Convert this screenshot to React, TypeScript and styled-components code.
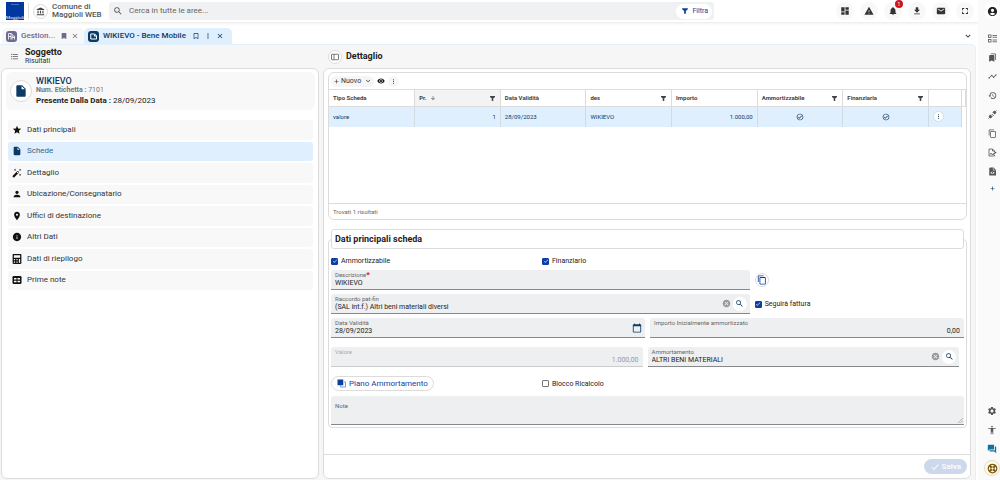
import React, { useState } from "react";
import styled, { createGlobalStyle, css } from "styled-components";
import {
  MdAccessibility, MdAccountBalance, MdAccountCircle, MdAdd, MdArrowDownward, MdAutoFixHigh, MdBookmark,
  MdBookmarkBorder, MdBookmarks, MdCalendarToday, MdCancel, MdCheck, MdClose, MdContentCopy, MdDashboard,
  MdExpandMore, MdFileDownload, MdFormatListBulleted, MdForum, MdFullscreen, MdHistory, MdInfo,
  MdInsertDriveFile, MdMail, MdMoreVert, MdNotifications, MdOutlineCheckCircle, MdPerson, MdPlace, MdSearch,
  MdSettings, MdStar, MdTimeline, MdVisibility, MdWarning,
} from "react-icons/md";
import { FaCalculator } from "react-icons/fa";

const navy = "#0b3a66";
const blue = "#0a3fa3";
const sky = "#e0effd";
const line = "#dcdcdc";

const GlobalStyle = createGlobalStyle`
  * { box-sizing: border-box; }
  body { margin: 0; background: #fff; color: #333; font: 8px/10px Roboto, sans-serif; }
  button, input, textarea { font: inherit; color: inherit; margin: 0; }
  button { border: 0; padding: 0; background: none; cursor: pointer; }
  svg { display: block; flex: none; }
`;

const Page = styled.div`
  display: flex;
  min-height: 100vh;
`;

const Main = styled.div`
  flex: 1;
  min-width: 0;
  display: flex;
  flex-direction: column;
`;

const Rail = styled.aside`
  width: 22px;
  padding: 3px 0 4px 6px;
  background: #fafafa;
  display: flex;
  flex-direction: column;
  align-items: center;
  gap: 3px;
`;

const RailButton = styled.button<{ $color?: string; $small?: boolean }>`
  width: 16px;
  height: ${(p) => (p.$small ? 12 : 16)}px;
  display: grid;
  place-items: center;
  color: ${(p) => p.$color || "#555"};
`;

const Account = styled(RailButton)`
  border-radius: 8px;
  background: #fff;
  color: #222;
  margin-bottom: 8px;
`;

const Help = styled(RailButton)`
  border: 1px solid #e4dcc0;
  border-radius: 8px;
  background: #fffbea;
  color: #7a5a10;
`;

const Spacer = styled.div`
  flex: 1;
`;

const Header = styled.header`
  height: 22px;
  padding: 0 4px 0 6px;
  display: flex;
  align-items: center;
  box-shadow: 0 1px 3px rgba(0, 0, 0, 0.1);
`;

const Brand = styled.div`
  width: 103px;
  display: flex;
  align-items: center;
  gap: 4px;
`;

const Divider = styled.span`
  width: 1px;
  height: 16px;
  background: #ddd;
`;

const Circle = styled.span<{ $size: number }>`
  width: ${(p) => p.$size}px;
  height: ${(p) => p.$size}px;
  border: 1px solid ${line};
  border-radius: 50%;
  background: #fff;
  display: grid;
  place-items: center;
  flex: none;
`;

const BrandName = styled.div`
  font-weight: 500;
  line-height: 8px;
  color: #555;
  white-space: nowrap;
`;

const Search = styled.form`
  flex: 0 1 605px;
  height: 18px;
  padding: 0 2px 0 4px;
  border-radius: 3px;
  background: #f0f1f2;
  display: flex;
  align-items: center;
  gap: 6px;
  color: #555;
`;

const SearchInput = styled.input`
  flex: 1;
  min-width: 0;
  border: 0;
  padding: 0;
  outline: 0;
  background: none;
  &::placeholder { color: #666; opacity: 1; }
`;

const FilterButton = styled.button`
  height: 15px;
  padding: 0 4px 0 5px;
  border-radius: 8px;
  background: #fff;
  display: flex;
  align-items: center;
  gap: 3px;
  font-size: 7px;
  color: ${blue};
`;

const HeaderActions = styled.nav`
  margin-left: auto;
  display: flex;
  gap: 6px;
`;

const HeaderButton = styled.button`
  position: relative;
  width: 18px;
  height: 18px;
  border-radius: 9px;
  background: #f8f8f8;
  color: #333;
  display: grid;
  place-items: center;
`;

const Badge = styled.span`
  position: absolute;
  top: -2px;
  right: -1px;
  width: 8px;
  height: 8px;
  border-radius: 4px;
  background: #d0151c;
  color: #fff;
  font-size: 5px;
  line-height: 8px;
`;

const Tabs = styled.div`
  height: 22px;
  padding: 6px 5px 0 2px;
  display: flex;
  align-items: stretch;
`;

const Tab = styled.div<{ $active?: boolean }>`
  width: ${(p) => (p.$active ? 148 : 82)}px;
  padding: 0 4px;
  border-radius: 5px 5px 0 0;
  display: flex;
  align-items: center;
  gap: 4px;
  font-weight: 500;
  white-space: nowrap;
  background: ${(p) => (p.$active ? sky : "#f7f7f7")};
  color: ${(p) => (p.$active ? navy : "#6d6a92")};
`;

const TabTools = styled.span<{ $wide?: boolean }>`
  margin-left: auto;
  display: flex;
  gap: ${(p) => (p.$wide ? 4 : 3)}px;
  padding-right: ${(p) => (p.$wide ? 4 : 1)}px;
`;

const IconButton = styled.button<{ $color?: string }>`
  color: ${(p) => p.$color || "inherit"};
  display: grid;
  place-items: center;
`;

const TabsMenu = styled(IconButton)`
  margin-left: auto;
  color: #333;
`;

const Workspace = styled.main`
  flex: 1;
  margin-right: 2px;
  padding: 0 4px 1px 1px;
  border: solid #e4f0fb;
  border-width: 1px 1px 0 0;
  border-radius: 0 5px 0 0;
  background: #f6f6f6;
  display: flex;
  gap: 4px;
`;

const Column = styled.section<{ $grow: number; $basis: number }>`
  flex: ${(p) => p.$grow} 1 ${(p) => p.$basis}px;
  min-width: 0;
  display: flex;
  flex-direction: column;
`;

const ColumnHeader = styled.div`
  height: 23px;
  padding: 0 4px 0 5px;
  display: flex;
  align-items: center;
  gap: 4px;
`;

const ListHeader = styled(ColumnHeader)`
  padding-left: 9px;
  gap: 6px;
`;

const Title = styled.h2`
  margin: 0;
  font-size: 9px;
  line-height: 9px;
  font-weight: 700;
  color: #222;
`;

const Subtitle = styled.div`
  line-height: 8px;
  font-size: 7px;
`;

const Card = styled.div`
  flex: 1;
  border: 1px solid ${line};
  border-radius: 6px;
  background: #fff;
  display: flex;
  flex-direction: column;
  padding: 3px 3px 4px 4px;
`;

const Summary = styled.div`
  height: 38px;
  padding: 0 4px;
  border-radius: 6px;
  background: #f8f8f8;
  display: flex;
  align-items: center;
  gap: 4px;
  color: ${navy};
`;

const SummaryName = styled.div`
  font-size: 9px;
  font-weight: 500;
  line-height: 9px;
`;

const SummaryLine = styled.div<{ $strong?: boolean }>`
  font-size: ${(p) => (p.$strong ? 8 : 7)}px;
  line-height: ${(p) => (p.$strong ? 11 : 9)}px;
  color: ${(p) => (p.$strong ? "#222" : "#777")};
  b { font-weight: 700; }
`;

const Menu = styled.nav`
  height: 170px;
  margin: 10px 2px 0;
  display: grid;
  grid-auto-rows: 1fr;
  gap: 2px;
`;

const MenuItem = styled.a<{ $active?: boolean }>`
  padding: 0 4px;
  border-radius: 3px;
  display: flex;
  align-items: center;
  gap: 5px;
  text-decoration: none;
  background: ${(p) => (p.$active ? sky : "#f8f8f8")};
  color: ${(p) => (p.$active ? "#3c6488" : "#333")};
  svg { color: ${(p) => (p.$active ? navy : "#111")}; }
`;

const Grid = styled.div`
  height: 148px;
  border: 1px solid ${line};
  border-radius: 6px;
  display: flex;
  flex-direction: column;
`;

const Toolbar = styled.div`
  height: 16px;
  padding: 0 2px;
  display: flex;
  align-items: center;
  gap: 3px;
`;

const Chip = styled.button`
  height: 11px;
  min-width: 11px;
  padding: 0 2px;
  border-radius: 6px;
  background: #f6f6f6;
  color: #333;
  font-size: 7px;
  display: flex;
  align-items: center;
  justify-content: center;
  span { margin: 0 3px 0 1px; }
`;

const Table = styled.table`
  width: 100%;
  table-layout: fixed;
  border-collapse: collapse;
  font-size: 6px;
  line-height: 8px;
  color: ${navy};
`;

const Th = styled.th<{ $sorted?: boolean }>`
  height: 17px;
  padding: 0 4px;
  border: solid ${line};
  border-width: 1px 1px 1px 0;
  text-align: left;
  font-weight: 700;
  color: #444;
  background: ${(p) => (p.$sorted ? "#f3f3f3" : "#fff")};
`;

const ThInner = styled.div`
  display: flex;
  align-items: center;
  gap: 3px;
  .filter { margin-left: auto; }
`;

const Td = styled.td<{ $align?: string; $blank?: boolean }>`
  height: 20px;
  padding: 0 4px;
  border-right: ${(p) => (p.$blank ? "0" : "1px solid #d3dbe2")};
  background: ${(p) => (p.$blank ? "#fff" : sky)};
  text-align: ${(p) => p.$align || "left"};
  svg { margin: 0 auto; }
`;

const RowMenu = styled.button`
  width: 11px;
  height: 11px;
  border: 1px solid ${line};
  border-radius: 6px;
  background: #fff;
  display: grid;
  place-items: center;
`;

const GridFooter = styled.div`
  margin-top: auto;
  height: 16px;
  padding: 3px 4px;
  border-top: 1px solid ${line};
  font-size: 6px;
  color: #666;
`;

const Group = styled.fieldset`
  min-width: 0;
  margin: 9px 0 0;
  padding: 7px 2px 2px;
  border: 1px solid ${line};
  border-radius: 4px;
  display: flex;
  flex-direction: column;
`;

const Legend = styled.legend`
  width: 100%;
  height: 20px;
  padding: 0 3px;
  border: 1px solid ${line};
  border-radius: 3px;
  background: #fff;
  font-size: 9px;
  line-height: 18px;
  font-weight: 700;
  color: #222;
`;

const Row = styled.div<{ $cols: string; $top?: number; $gap?: number; $right?: number }>`
  margin: ${(p) => p.$top || 0}px ${(p) => p.$right || 0}px 0 0;
  display: grid;
  grid-template-columns: ${(p) => p.$cols};
  gap: ${(p) => p.$gap || 0}px;
  align-items: center;
`;

const CheckLabel = styled.label`
  display: flex;
  align-items: center;
  gap: 3px;
  font-size: 7px;
  color: #222;
`;

const CheckMark = styled.span`
  display: grid;
  place-items: center;
  color: #fff;
  > * { grid-area: 1 / 1; }
  svg { pointer-events: none; }
`;

const CheckInput = styled.input`
  appearance: none;
  width: 7px;
  height: 7px;
  border: 1px solid #777;
  border-radius: 1px;
  background: #fff;
  &:checked { border-color: ${blue}; background: ${blue}; }
`;

const FieldBox = styled.div<{ $disabled?: boolean; $tall?: boolean }>`
  height: ${(p) => (p.$tall ? 29 : 20)}px;
  border-bottom: 1px solid ${(p) => (p.$disabled ? "#ccc" : "#888")};
  border-radius: 3px 3px 0 0;
  background: #edeff0;
  display: flex;
  align-items: center;
  color: ${(p) => (p.$disabled ? "#999" : "#222")};
`;

const FieldText = styled.div`
  flex: 1;
  min-width: 0;
  height: 100%;
  padding: 1px 0 0 4px;
  display: flex;
  flex-direction: column;
`;

const FieldLabel = styled.label<{ $disabled?: boolean }>`
  font-size: 6px;
  line-height: 8px;
  color: ${(p) => (p.$disabled ? "#aaa" : "#666")};
  b { color: #d0151c; font-size: 8px; line-height: 6px; }
`;

const inputStyle = css`
  width: 100%;
  border: 0;
  outline: 0;
  background: none;
`;

const FieldInput = styled.input<{ $right?: boolean }>`
  ${inputStyle}
  height: 8px;
  padding: 0 4px 0 0;
  font-size: 7px;
  line-height: 8px;
  text-align: ${(p) => (p.$right ? "right" : "left")};
`;

const NoteText = styled.textarea`
  ${inputStyle}
  flex: 1;
  min-height: 0;
  padding: 0;
  font-size: 7px;
  resize: none;
`;

const NoteLabel = styled(FieldLabel)`
  padding-top: 5px;
`;

const Grip = styled.svg`
  align-self: flex-end;
  margin: 0 1px 1px 0;
`;

const FieldTools = styled.div`
  display: flex;
  align-items: center;
  gap: 2px;
  padding-right: 3px;
`;

const RoundButton = styled.button<{ $outlined?: boolean }>`
  width: 14px;
  height: 14px;
  border: ${(p) => (p.$outlined ? `1px solid ${line}` : "0")};
  border-radius: 7px;
  background: #fff;
  color: ${(p) => (p.$outlined ? blue : navy)};
  display: grid;
  place-items: center;
`;

const PlanButton = styled.button`
  justify-self: start;
  height: 15px;
  padding: 0 5px;
  border: 1px solid ${line};
  border-radius: 8px;
  background: #fff;
  color: ${blue};
  display: flex;
  align-items: center;
  gap: 3px;
  white-space: nowrap;
`;

const CardFooter = styled.div`
  margin: auto -3px 0 -4px;
  height: 20px;
  padding: 4px 3px 0;
  border-top: 1px solid ${line};
  display: flex;
  justify-content: flex-end;
`;

const SaveButton = styled.button`
  height: 15px;
  padding: 0 6px;
  border-radius: 8px;
  background: #ccd8ec;
  color: #fff;
  font-weight: 500;
  display: flex;
  align-items: center;
  gap: 2px;
`;

type IconProps = { size?: number };

function Logo() {
  return (
    <svg width="18" height="18" viewBox="0 0 18 18" aria-label="Maggioli">
      <rect width="18" height="18" fill="#0038a0" />
      <path d="M5 2.500h8" stroke="#5b7fc8" strokeWidth="0.800" />
      <text x="9" y="16.500" fill="#fff" fontSize="5" textAnchor="middle" fontFamily="Liberation Serif, serif">Maggioli</text>
    </svg>
  );
}

function RegistryIcon() {
  return (
    <svg width="11" height="11" viewBox="0 0 22 22">
      <rect width="22" height="22" rx="6" fill="#6d6a92" />
      <path d="M5 17V5h5v12M5 11h5M12 17v-7h5v7M12 13h5M10 5l4 3" fill="none" stroke="#fff" strokeWidth="1.6" />
    </svg>
  );
}

function AssetIcon() {
  return (
    <svg width="11" height="11" viewBox="0 0 22 22">
      <rect width="22" height="22" rx="6" fill={navy} />
      <path d="M5.500 6h8l3.500 3.500V16H5.500z" fill="none" stroke="#fff" strokeWidth="2" strokeLinejoin="round" />
      <path d="M12 6v5h5z" fill="#fff" />
    </svg>
  );
}

function PanelIcon() {
  return (
    <svg width="8" height="8" viewBox="0 0 16 16" fill="none" stroke="#555" strokeWidth="1.6">
      <rect x="1" y="2.500" width="14" height="11" rx="1" />
      <path d="M6 3v10" />
    </svg>
  );
}

function Funnel({ size = 7 }: IconProps) {
  return (
    <svg className="filter" width={size} height={size} viewBox="0 0 14 14" fill="currentColor">
      <path d="M2 2h10v2L8.500 7V12h-3V7L2 4z" />
    </svg>
  );
}

function LifeRing() {
  return (
    <svg width="11" height="11" viewBox="0 0 22 22" fill="none" stroke="currentColor">
      <circle cx="11" cy="11" r="8.500" strokeWidth="2.500" />
      <circle cx="11" cy="11" r="3" strokeWidth="2" />
      <path d="M5 5l4 4M17 5l-4 4M5 17l4-4M17 17l-4-4" strokeWidth="4" />
    </svg>
  );
}

function DetailListIcon({ size = 9 }: IconProps) {
  return (
    <svg width={size} height={size} viewBox="0 0 18 18" fill="none" stroke="currentColor" strokeWidth="1.6">
      <rect x="1" y="2" width="5" height="5" />
      <rect x="1" y="11" width="5" height="5" />
      <path d="M9 3h9M9 6.500h9M9 12h9M9 15.500h9" />
    </svg>
  );
}

function PlugIcon({ size = 9 }: IconProps) {
  return (
    <svg width={size} height={size} viewBox="0 0 18 18" fill="currentColor" stroke="currentColor">
      <path d="M9.500 4.500l4 4 1.500-1.500a2.800 2.800 0 0 0-4-4zM4.500 9.500l4 4L7 15a2.800 2.800 0 0 1-4-4z" strokeWidth="1" />
      <path d="M14.500 3.500L17 1M3.500 14.500L1 17M7 10.500l2.500-2.500M9 12.500l2.500-2.500" strokeWidth="1.800" />
    </svg>
  );
}

function SignIcon({ size = 9 }: IconProps) {
  return (
    <svg width={size} height={size} viewBox="0 0 18 18" fill="none" stroke="currentColor" strokeWidth="1.600">
      <path d="M13 8V6L9 2H2v14h11v-2" />
      <path d="M9 2v4h4M4 13l2-3 1.500 3H10" />
      <path d="M10 13l6.500-5" strokeWidth="2.400" />
    </svg>
  );
}

function FileViewIcon({ size = 9 }: IconProps) {
  return (
    <svg width={size} height={size} viewBox="0 0 18 18">
      <path d="M4 1h7l5 5v11H2.500V2.500z" fill="currentColor" />
      <path d="M10.500 2v4.500H15" fill="none" stroke="#fff" strokeWidth="1" />
      <path d="M4.500 11.500q4.500-4.500 9 0q-4.500 4.500-9 0z" fill="#fff" />
      <circle cx="9" cy="11.500" r="1.600" fill="currentColor" />
    </svg>
  );
}

function LedgerIcon({ size = 9 }: IconProps) {
  return (
    <svg width={size} height={size} viewBox="0 0 20 20">
      <rect x="1" y="2" width="18" height="16" rx="2.500" fill="currentColor" />
      <path d="M4 6h5v3H4zM11 6h5v3h-5zM4 11.500h5v3H4zM11 11.500h5v3h-5z" fill="#fff" />
    </svg>
  );
}

function PlanIcon() {
  return (
    <svg width="9" height="9" viewBox="0 0 18 18">
      <path d="M7 13v3h10V6h-3" fill="none" stroke="#7f9ad0" strokeWidth="2" />
      <rect x="1" y="1" width="11.500" height="11.500" fill="currentColor" />
    </svg>
  );
}

function Check({ label, on }: { label: string; on?: boolean }) {
  const [checked, setChecked] = useState(!!on);
  return (
    <CheckLabel>
      <CheckMark>
        <CheckInput type="checkbox" checked={checked} onChange={() => setChecked(!checked)} />
        {checked && <MdCheck size={6} />}
      </CheckMark>
      {label}
    </CheckLabel>
  );
}

type FieldProps = {
  id: string;
  label: string;
  value: string;
  required?: boolean;
  disabled?: boolean;
  right?: boolean;
  lookup?: boolean;
  children?: React.ReactNode;
};

function Field({ id, label, value, required, disabled, right, lookup, children }: FieldProps) {
  return (
    <FieldBox $disabled={disabled}>
      <FieldText>
        <FieldLabel htmlFor={id} $disabled={disabled}>{label}{required && <b>*</b>}</FieldLabel>
        <FieldInput id={id} defaultValue={value} disabled={disabled} $right={right} />
      </FieldText>
      {lookup && (
        <FieldTools>
          <IconButton type="button" aria-label="Cancella" $color="#999"><MdCancel size={9} /></IconButton>
          <RoundButton type="button" aria-label="Cerca"><MdSearch size={9} /></RoundButton>
        </FieldTools>
      )}
      {children}
    </FieldBox>
  );
}

const menu = [
  { label: "Dati principali", Icon: MdStar },
  { label: "Schede", Icon: MdInsertDriveFile, active: true },
  { label: "Dettaglio", Icon: MdAutoFixHigh },
  { label: "Ubicazione/Consegnatario", Icon: MdPerson },
  { label: "Uffici di destinazione", Icon: MdPlace },
  { label: "Altri Dati", Icon: MdInfo },
  { label: "Dati di riepilogo", Icon: FaCalculator, small: true },
  { label: "Prime note", Icon: LedgerIcon },
];

const columns = [
  { label: "Tipo Scheda" },
  { label: "Pr.", sorted: true, filter: true },
  { label: "Data Validità" },
  { label: "des", filter: true },
  { label: "Importo" },
  { label: "Ammortizzabile", filter: true },
  { label: "Finanziaria", filter: true },
];

const headerActions = [
  { label: "Cruscotto", Icon: MdDashboard },
  { label: "Avvisi", Icon: MdWarning },
  { label: "Notifiche", Icon: MdNotifications, badge: "1" },
  { label: "Download", Icon: MdFileDownload },
  { label: "Posta", Icon: MdMail },
  { label: "Schermo intero", Icon: MdFullscreen },
];

const railTop = [
  { label: "Elenco", Icon: DetailListIcon },
  { label: "Segnalibri", Icon: MdBookmarks },
  { label: "Andamento", Icon: MdTimeline },
  { label: "Cronologia", Icon: MdHistory },
  { label: "Connessioni", Icon: PlugIcon },
  { label: "Copie", Icon: MdContentCopy },
  { label: "Firma", Icon: SignIcon },
  { label: "Documenti", Icon: FileViewIcon },
];

export default function App() {
  return (
    <Page>
      <GlobalStyle />
      <Main>
        <Header>
          <Brand>
            <Logo />
            <Divider />
            <Circle $size={15}><MdAccountBalance size={9} color="#444" /></Circle>
            <BrandName>Comune di<br />Maggioli WEB</BrandName>
          </Brand>
          <Search onSubmit={(e) => e.preventDefault()}>
            <MdSearch size={10} />
            <SearchInput aria-label="Cerca" placeholder="Cerca in tutte le aree..." />
            <FilterButton type="button"><Funnel size={8} />Filtra</FilterButton>
          </Search>
          <HeaderActions>
            {headerActions.map(({ label, Icon, badge }) => (
              <HeaderButton key={label} aria-label={label}>
                <Icon size={10} />
                {badge && <Badge>{badge}</Badge>}
              </HeaderButton>
            ))}
          </HeaderActions>
        </Header>

        <Tabs>
          <Tab>
            <RegistryIcon />
            Gestion...
            <TabTools>
              <IconButton aria-label="Segnalibro"><MdBookmark size={8} /></IconButton>
              <IconButton aria-label="Chiudi"><MdClose size={8} /></IconButton>
            </TabTools>
          </Tab>
          <Tab $active>
            <AssetIcon />
            WIKIEVO - Bene Mobile
            <TabTools $wide>
              <IconButton aria-label="Segnalibro"><MdBookmarkBorder size={8} /></IconButton>
              <IconButton aria-label="Altro"><MdMoreVert size={8} /></IconButton>
              <IconButton aria-label="Chiudi"><MdClose size={8} /></IconButton>
            </TabTools>
          </Tab>
          <TabsMenu aria-label="Elenco schede"><MdExpandMore size={10} /></TabsMenu>
        </Tabs>

        <Workspace>
          <Column $grow={1} $basis={318}>
            <ListHeader>
              <MdFormatListBulleted size={9} color="#555" />
              <div>
                <Title>Soggetto</Title>
                <Subtitle>Risultati</Subtitle>
              </div>
            </ListHeader>
            <Card>
              <Summary>
                <Circle $size={22}><MdInsertDriveFile size={14} /></Circle>
                <div>
                  <SummaryName>WIKIEVO</SummaryName>
                  <SummaryLine><b>Num. Etichetta :</b> 7101</SummaryLine>
                  <SummaryLine $strong><b>Presente Dalla Data :</b> 28/09/2023</SummaryLine>
                </div>
              </Summary>
              <Menu>
                {menu.map(({ label, Icon, active }) => (
                  <MenuItem key={label} href="#" $active={active}>
                    <Icon size={10} />
                    {label}
                  </MenuItem>
                ))}
              </Menu>
            </Card>
          </Column>

          <Column $grow={2} $basis={648}>
            <ColumnHeader>
              <Circle $size={14}><PanelIcon /></Circle>
              <Title>Dettaglio</Title>
            </ColumnHeader>
            <Card>
              <Grid>
                <Toolbar>
                  <Chip><MdAdd size={7} /><span>Nuovo</span><MdExpandMore size={8} /></Chip>
                  <IconButton aria-label="Visualizza" $color="#111"><MdVisibility size={8} /></IconButton>
                  <Chip aria-label="Altro"><MdMoreVert size={7} /></Chip>
                </Toolbar>
                <Table>
                  <colgroup>
                    {columns.map((c) => <col key={c.label} />)}
                    <col width="33" />
                    <col width="4" />
                  </colgroup>
                  <thead>
                    <tr>
                      {columns.map((c) => (
                        <Th key={c.label} $sorted={c.sorted}>
                          <ThInner>
                            <span>{c.label}</span>
                            {c.sorted && <MdArrowDownward size={6} />}
                            {c.filter && <Funnel />}
                          </ThInner>
                        </Th>
                      ))}
                      <Th />
                      <Th />
                    </tr>
                  </thead>
                  <tbody>
                    <tr>
                      <Td>valore</Td>
                      <Td $align="right">1</Td>
                      <Td>28/09/2023</Td>
                      <Td>WIKIEVO</Td>
                      <Td $align="right">1.000,00</Td>
                      <Td><MdOutlineCheckCircle size={8} /></Td>
                      <Td><MdOutlineCheckCircle size={8} /></Td>
                      <Td><RowMenu aria-label="Azioni"><MdMoreVert size={7} /></RowMenu></Td>
                      <Td $blank />
                    </tr>
                  </tbody>
                </Table>
                <GridFooter>Trovati 1 risultati</GridFooter>
              </Grid>

              <Group>
                <Legend>Dati principali scheda</Legend>
                <Row $cols="1fr 2fr">
                  <Check label="Ammortizzabile" on />
                  <Check label="Finanziario" on />
                </Row>
                <Row $cols="2fr 1fr" $gap={5} $top={4}>
                  <Field id="descrizione" label="Descrizione" value="WIKIEVO" required />
                  <RoundButton type="button" $outlined aria-label="Copia"><MdContentCopy size={10} /></RoundButton>
                </Row>
                <Row $cols="2fr 1fr" $gap={5} $top={4}>
                  <Field id="raccordo" label="Raccordo pat-fin" value="(SAL int.f.) Altri beni materiali diversi" lookup />
                  <Check label="Seguirà fattura" on />
                </Row>
                <Row $cols="1fr 1fr" $gap={5} $top={4}>
                  <Field id="data" label="Data Validità" value="28/09/2023">
                    <FieldTools>
                      <IconButton type="button" aria-label="Calendario" $color={navy}><MdCalendarToday size={10} /></IconButton>
                    </FieldTools>
                  </Field>
                  <Field id="importo" label="Importo Inizialmente ammortizzato" value="0,00" right />
                </Row>
                <Row $cols="1fr 1fr" $gap={5} $top={9} $right={5}>
                  <Field id="valore" label="Valore" value="1.000,00" disabled right />
                  <Field id="ammortamento" label="Ammortamento" value="ALTRI BENI MATERIALI" lookup />
                </Row>
                <Row $cols="1fr 2fr" $top={9}>
                  <PlanButton type="button"><PlanIcon />Piano Ammortamento</PlanButton>
                  <Check label="Blocco Ricalcolo" />
                </Row>
                <Row $cols="1fr" $top={5}>
                  <FieldBox $tall>
                    <FieldText>
                      <NoteLabel htmlFor="note">Note</NoteLabel>
                      <NoteText id="note" />
                    </FieldText>
                    <Grip width="5" height="5" viewBox="0 0 10 10" stroke="#777" aria-hidden>
                      <path d="M0 10L10 0M5 10l5-5" />
                    </Grip>
                  </FieldBox>
                </Row>
              </Group>

              <CardFooter>
                <SaveButton type="button"><MdCheck size={10} />Salva</SaveButton>
              </CardFooter>
            </Card>
          </Column>
        </Workspace>
      </Main>

      <Rail>
        <Account aria-label="Profilo"><MdAccountCircle size={11} /></Account>
        {railTop.map(({ label, Icon }) => (
          <RailButton key={label} aria-label={label}><Icon size={9} /></RailButton>
        ))}
        <RailButton aria-label="Aggiungi" $color={navy} $small><MdAdd size={7} /></RailButton>
        <Spacer />
        <RailButton aria-label="Impostazioni"><MdSettings size={10} /></RailButton>
        <RailButton aria-label="Accessibilità"><MdAccessibility size={10} /></RailButton>
        <RailButton aria-label="Chat" $color="#14709c"><MdForum size={10} /></RailButton>
        <Help aria-label="Aiuto"><LifeRing /></Help>
      </Rail>
    </Page>
  );
}
